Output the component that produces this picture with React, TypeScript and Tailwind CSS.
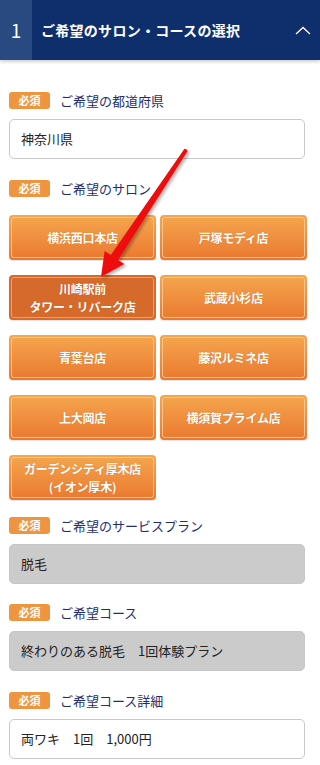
import React from "react";

const font = { fontFamily: '"Noto Sans CJK JP", "Noto Sans", sans-serif' };

function Badge() {
  return (
    <span className="inline-flex h-[17px] w-[41px] items-center justify-center rounded-[3px] bg-[#f0953f] text-[11px] font-bold leading-none text-white">
      必須
    </span>
  );
}

function Label({ text }: { text: string }) {
  return (
    <div className="flex items-center gap-[10px]">
      <Badge />
      <span className="text-[13px] leading-none text-[#1d2f6f]">{text}</span>
    </div>
  );
}

function Box({ text, gray }: { text: string; gray?: boolean }) {
  return (
    <div
      className={
        "flex h-[40px] w-[296px] items-center rounded-[5px] border pl-[11px] text-[13px] text-[#222] " +
        (gray ? "border-[#c6c6c6] bg-[#cbcbcb]" : "border-[#c8c8c8] bg-white")
      }
    >
      {text}
    </div>
  );
}

function SalonButton({ lines, selected }: { lines: string[]; selected?: boolean }) {
  return (
    <div
      className={
        "h-[45px] rounded-[4px] p-[2px] shadow-[0_1px_1px_rgba(0,0,0,0.12)] " +
        (selected
          ? "bg-[#d66a2a]"
          : "bg-gradient-to-b from-[#f5a64e] to-[#ea782f]")
      }
    >
      <div
        className={
          "flex h-full flex-col items-center justify-center rounded-[3px] border text-center text-[12px] font-bold leading-[18px] tracking-[-0.02em] text-white [text-shadow:0_0_1px_rgba(120,50,0,0.4)] " +
          (selected ? "border-[#eaa072]" : "border-[#f9c693]")
        }
      >
        {lines.map((l) => (
          <span key={l}>{l}</span>
        ))}
      </div>
    </div>
  );
}

export default function App() {
  return (
    <div className="relative w-[320px] h-[765px] overflow-hidden bg-white" style={font}>
      <div className="relative z-10 flex h-[60px] items-center bg-[#0f2f6c] shadow-[0_2px_3px_rgba(0,0,0,0.18)]">
        <div className="flex h-full w-[32px] items-center justify-center bg-[#294a81] text-[19px] text-white">
          1
        </div>
        <div className="ml-[9px] flex-1 text-[14px] font-bold tracking-[0.02em] text-white">
          ご希望のサロン・コースの選択
        </div>
        <svg className="mr-[9px]" width="16" height="9" viewBox="0 0 16 9">
          <path d="M1 8 L8 1.5 L15 8" fill="none" stroke="white" strokeWidth="1.3" />
        </svg>
      </div>

      <div className="flex flex-col pl-[9px] pt-[32px]">
        <Label text="ご希望の都道府県" />
        <div className="mt-[10px]">
          <Box text="神奈川県" />
        </div>

        <div className="mt-[21px]">
          <Label text="ご希望のサロン" />
        </div>

        <div className="mt-[18px] grid w-[298px] grid-cols-2 gap-x-[4px] gap-y-[15px]">
          <SalonButton lines={["横浜西口本店"]} />
          <SalonButton lines={["戸塚モディ店"]} />
          <SalonButton lines={["川崎駅前", "タワー・リバーク店"]} selected />
          <SalonButton lines={["武蔵小杉店"]} />
          <SalonButton lines={["青葉台店"]} />
          <SalonButton lines={["藤沢ルミネ店"]} />
          <SalonButton lines={["上大岡店"]} />
          <SalonButton lines={["横須賀プライム店"]} />
          <SalonButton lines={["ガーデンシティ厚木店", "(イオン厚木)"]} />
        </div>

        <div className="mt-[17px]">
          <Label text="ご希望のサービスプラン" />
        </div>
        <div className="mt-[10px]">
          <Box text="脱毛" gray />
        </div>

        <div className="mt-[20px]">
          <Label text="ご希望コース" />
        </div>
        <div className="mt-[10px]">
          <Box text="終わりのある脱毛　1回体験プラン" gray />
        </div>

        <div className="mt-[21px]">
          <Label text="ご希望コース詳細" />
        </div>
        <div className="mt-[10px]">
          <Box text="両ワキ　1回　1,000円" />
        </div>
      </div>

      <svg
        className="pointer-events-none absolute left-0 top-0 z-20"
        width="320"
        height="765"
        viewBox="0 0 320 765"
      >
        <defs>
          <filter id="sh" x="-20%" y="-20%" width="140%" height="140%">
            <feDropShadow dx="2" dy="2" stdDeviation="1.5" floodColor="#000" floodOpacity="0.3" />
          </filter>
        </defs>
        <path
          d="M184.3 148.9 Q186 148.5 187.7 151.1 L118.2 260 L124.4 264.1 L101 277 L104.6 250.9 L110.8 255 Z"
          fill="#ee1111"
          filter="url(#sh)"
        />
      </svg>
    </div>
  );
}
